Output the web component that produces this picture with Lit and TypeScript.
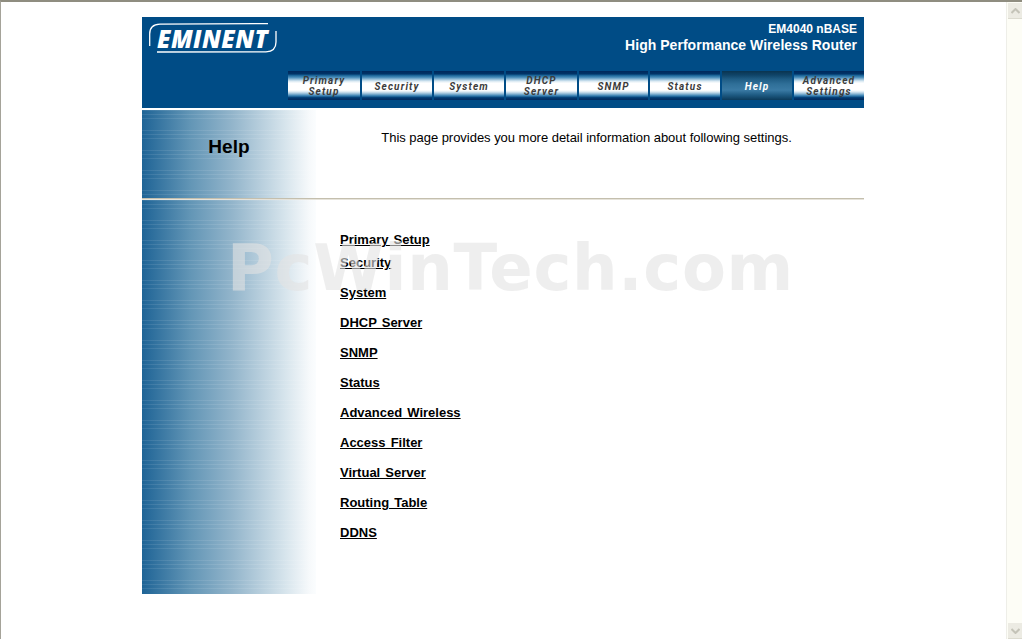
import { LitElement, html, css } from "lit";
import { customElement } from "lit/decorators.js";

const NAV: { lines: string[]; width: number; active?: boolean }[] = [
  { lines: ["Primary", "Setup"], width: 72 },
  { lines: ["Security"], width: 70 },
  { lines: ["System"], width: 70 },
  { lines: ["DHCP", "Server"], width: 71 },
  { lines: ["SNMP"], width: 69 },
  { lines: ["Status"], width: 70 },
  { lines: ["Help"], width: 70, active: true },
  { lines: ["Advanced", "Settings"], width: 70 },
];

const LINKS: { text: string; cls?: string }[] = [
  { text: "Primary Setup", cls: "first" },
  { text: "Security" },
  { text: "System" },
  { text: "DHCP Server" },
  { text: "SNMP" },
  { text: "Status" },
  { text: "Advanced Wireless" },
  { text: "Access Filter" },
  { text: "Virtual Server" },
  { text: "Routing Table" },
  { text: "DDNS" },
];

@customElement("app-root")
export class AppRoot extends LitElement {
  static styles = css`
    :host {
      display: block;
      width: 1022px;
      height: 639px;
      overflow: hidden;
      font-family: "Liberation Sans", Arial, sans-serif;
      background: #fff;
    }
    .window {
      position: relative;
      height: 639px;
      box-sizing: border-box;
      border-top: 2px solid #8f8d80;
      border-left: 1px solid #a5a399;
      display: flex;
    }
    .viewport {
      flex: 1;
      min-width: 0;
      padding: 15px 0 0 141px;
    }
    .scrollbar {
      width: 16px;
      flex: none;
      background: #fdfdf6;
      border-left: 1px solid #eeeee8;
      box-sizing: border-box;
      display: flex;
      flex-direction: column;
      justify-content: space-between;
      padding: 1px 1px 0 1px;
    }
    .sb-btn {
      width: 14px;
      height: 15px;
      background: #ecebe3;
      display: flex;
      align-items: center;
      justify-content: center;
      border-bottom: 1px solid #dcdbd0;
    }
    .sb-btn svg { display: block; }
    .page {
      width: 722px;
    }
    header {
      height: 91px;
      background: #004c86;
      display: flex;
      flex-direction: column;
      box-sizing: border-box;
    }
    .head-top {
      height: 54px;
      display: flex;
      justify-content: space-between;
      padding: 0 7px 0 7px;
    }
    .logo {
      position: relative;
      width: 128px;
      height: 30px;
      margin-top: 6px;
    }
    .logo svg { position: absolute; inset: 0; }
    .logo span {
      position: absolute;
      left: 8px;
      top: 0;
      font: italic 800 24px/31px "Open Sans", sans-serif;
      color: #fff;
      letter-spacing: 0.4px;
      white-space: nowrap;
    }
    .title {
      color: #fff;
      text-align: right;
      font-weight: 700;
      padding-top: 5px;
    }
    .t1 { font-size: 12px; line-height: 14px; }
    .t2 { font-size: 14px; line-height: 16px; margin-top: 1px; letter-spacing: 0.03px; }
    nav {
      display: flex;
      gap: 2px;
      padding-left: 146px;
      height: 29px;
    }
    .tab {
      height: 29px;
      flex: none;
      box-sizing: border-box;
      padding-top: 1px;
      display: flex;
      flex-direction: column;
      align-items: center;
      justify-content: center;
      background: linear-gradient(180deg,
        #00285c 0, #003468 10%, #1a6498 15%, #4a8dba 22%, #98c0da 29%, #d8e8f2 35%,
        #fff 42%, #fff 66%, #d8e8f2 72%, #8ab6d4 79%, #2f7aae 86%, #003a72 92%, #00285c 100%);
      font: italic 700 10px/11px Roboto, sans-serif;
      letter-spacing: 1.15px;
      color: #3c3c3c;
    }
    .tab.active {
      background: linear-gradient(180deg, #0a3450 0, #0f4468 14%, #1f5c84 28%, #2f6f98 45%, #3a7aa4 66%, #1f5c84 82%, #0b3a5a 100%);
      color: #fff;
    }
    .strip {
      height: 2px;
    }
    .band {
      display: flex;
      height: 88px;
    }
    .side {
      width: 174px;
      flex: none;
      background:
        repeating-linear-gradient(180deg,
          rgba(255,255,255,0.09) 0 1px, rgba(255,255,255,0) 1px 4px,
          rgba(255,255,255,0.09) 4px 5px, rgba(255,255,255,0) 5px 8px,
          rgba(255,255,255,0.09) 8px 9px, rgba(255,255,255,0) 9px 20px),
        linear-gradient(90deg, #1f6496 0, #6396b6 28%, #93b5cb 52%, #d6e4ec 82%, #f6f9fb 96%, #fbfdfe 100%);
    }
    .help-side {
      display: flex;
      justify-content: center;
      padding-top: 26px;
      box-sizing: border-box;
    }
    h1 {
      margin: 0;
      font-size: 19px;
      line-height: 22px;
      font-weight: 700;
      color: #000;
      letter-spacing: 0.1px;
    }
    .intro {
      flex: 1;
      text-align: center;
      font-size: 13px;
      line-height: 15px;
      padding-top: 20px;
      padding-right: 7px;
      box-sizing: border-box;
      color: #000;
      letter-spacing: -0.03px;
    }
    .rule {
      height: 2px;
      background: linear-gradient(180deg, #c4bfae 0 50%, #e6e3da 50% 100%);
    }
    .body {
      display: flex;
      height: 394px;
    }
    .links {
      padding: 32px 0 0 24px;
      display: flex;
      flex-direction: column;
      align-items: flex-start;
    }
    .links a {
      display: block;
      font-size: 13px;
      line-height: 15px;
      font-weight: 700;
      color: #000;
      text-decoration: underline;
      margin-bottom: 15px;
      word-spacing: 1.5px;
    }
    .links a.first { margin-bottom: 8px; }
    .mark {
      position: absolute;
      left: 226px;
      top: 229px;
      font: 700 64px/75px "DejaVu Sans", sans-serif;
      letter-spacing: 0.7px;
      color: rgba(226, 226, 226, 0.6);
      white-space: nowrap;
      pointer-events: none;
    }
  `;

  render() {
    return html`
      <div class="window">
        <div class="viewport">
          <div class="page">
            <header>
              <div class="head-top">
                <div class="logo">
                  <svg width="128" height="30" viewBox="0 0 128 30" fill="none" stroke="#fff" stroke-width="1.3">
                    <path d="M0.7 23 V11 Q0.7 1.5 11 1.2 L119 0.6" />
                    <path d="M127 8 V19 Q127 28.5 117 28.8 L8 29" />
                  </svg>
                  <span>EMINENT</span>
                </div>
                <div class="title">
                  <div class="t1">EM4040 nBASE</div>
                  <div class="t2">High Performance Wireless Router</div>
                </div>
              </div>
              <nav>
                ${NAV.map(
                  (n) => html`<div
                    class="tab ${n.active ? "active" : ""}"
                    style="width:${n.width}px"
                  >
                    ${n.lines.map((l) => html`<div>${l}</div>`)}
                  </div>`
                )}
              </nav>
            </header>
            <div class="strip"></div>
            <div class="band">
              <div class="side help-side"><h1>Help</h1></div>
              <div class="intro">This page provides you more detail information about following settings.</div>
            </div>
            <div class="rule"></div>
            <div class="body">
              <div class="side"></div>
              <div class="links">
                ${LINKS.map((l) => html`<a class=${l.cls ?? ""}>${l.text}</a>`)}
              </div>
            </div>
          </div>
        </div>
        <div class="scrollbar">
          <div class="sb-btn">
            <svg width="9" height="6" viewBox="0 0 9 6"><path d="M0.5 5 L4.5 1 L8.5 5" fill="none" stroke="#c4c3b8" stroke-width="2"/></svg>
          </div>
          <div class="sb-btn">
            <svg width="9" height="6" viewBox="0 0 9 6"><path d="M0.5 1 L4.5 5 L8.5 1" fill="none" stroke="#c4c3b8" stroke-width="2"/></svg>
          </div>
        </div>
        <div class="mark">PcWinTech.com</div>
      </div>
    `;
  }
}
